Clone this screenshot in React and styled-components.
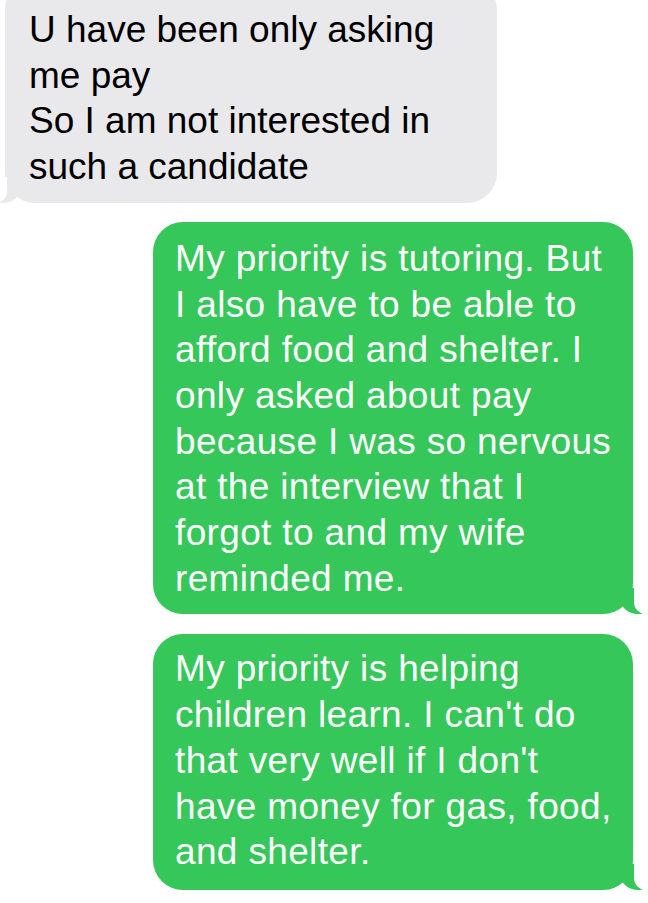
import React from "react";
import styled, { createGlobalStyle } from "styled-components";

const GREEN = "#35c759";
const GRAY = "#e9e9eb";

const GlobalStyle = createGlobalStyle`
  html, body {
    margin: 0;
    padding: 0;
    background: #ffffff;
  }
  body {
    font-family: "Liberation Sans", Arial, sans-serif;
    -webkit-font-smoothing: antialiased;
  }
`;

const Thread = styled.div`
  display: flex;
  flex-direction: column;
  width: 648px;
  height: 903px;
  overflow: hidden;
  background: #ffffff;
`;

const Bubble = styled.div`
  position: relative;
  box-sizing: border-box;
  flex-shrink: 0;
  width: ${(p) => p.$width}px;
  padding: ${(p) => p.$pad};
  margin: ${(p) => p.$margin};
  border-radius: 30px;
  background: ${(p) => (p.$sent ? GREEN : GRAY)};
  color: ${(p) => (p.$sent ? "#ffffff" : "#000000")};
  font-size: 37px;
  line-height: 45.7px;
  letter-spacing: ${(p) => (p.$sent ? "0.35px" : "0")};
  white-space: pre-line;
  align-self: ${(p) => (p.$sent ? "flex-end" : "flex-start")};

  /* iMessage tail */
  &::before {
    content: "";
    position: absolute;
    bottom: 0;
    height: 26px;
    width: 22px;
    background: ${(p) => (p.$sent ? GREEN : GRAY)};
    ${(p) =>
      p.$sent
        ? "right: -9px; border-bottom-left-radius: 18px 16px;"
        : "left: -6px; border-bottom-right-radius: 18px 16px;"}
  }

  &::after {
    content: "";
    position: absolute;
    bottom: 0;
    height: 26px;
    width: 12px;
    background: #ffffff;
    ${(p) =>
      p.$sent
        ? "right: -13px; border-bottom-left-radius: 12px;"
        : "left: -10px; border-bottom-right-radius: 12px;"}
  }
`;

const messages = [
  {
    sent: false,
    width: 492,
    pad: "27px 20px 13px 24px",
    margin: "-20px 0 0 5px",
    text: "U have been only asking\nme pay\nSo I am not interested in\nsuch a candidate",
  },
  {
    sent: true,
    width: 480,
    pad: "14px 20px 13px 22px",
    margin: "19px 15px 0 0",
    text:
      "My priority is tutoring. But\nI also have to be able to\nafford food and shelter. I\nonly asked about pay\nbecause I was so nervous\nat the interview that I\nforgot to and my wife\nreminded me.",
  },
  {
    sent: true,
    width: 480,
    pad: "12px 20px 15px 22px",
    margin: "20px 15px 0 0",
    text:
      "My priority is helping\nchildren learn. I can't do\nthat very well if I don't\nhave money for gas, food,\nand shelter.",
  },
];

export default function App() {
  return (
    <>
      <GlobalStyle />
      <Thread>
        {messages.map((m, i) => (
          <Bubble
            key={i}
            $sent={m.sent}
            $width={m.width}
            $pad={m.pad}
            $margin={m.margin}
          >
            {m.text}
          </Bubble>
        ))}
      </Thread>
    </>
  );
}
